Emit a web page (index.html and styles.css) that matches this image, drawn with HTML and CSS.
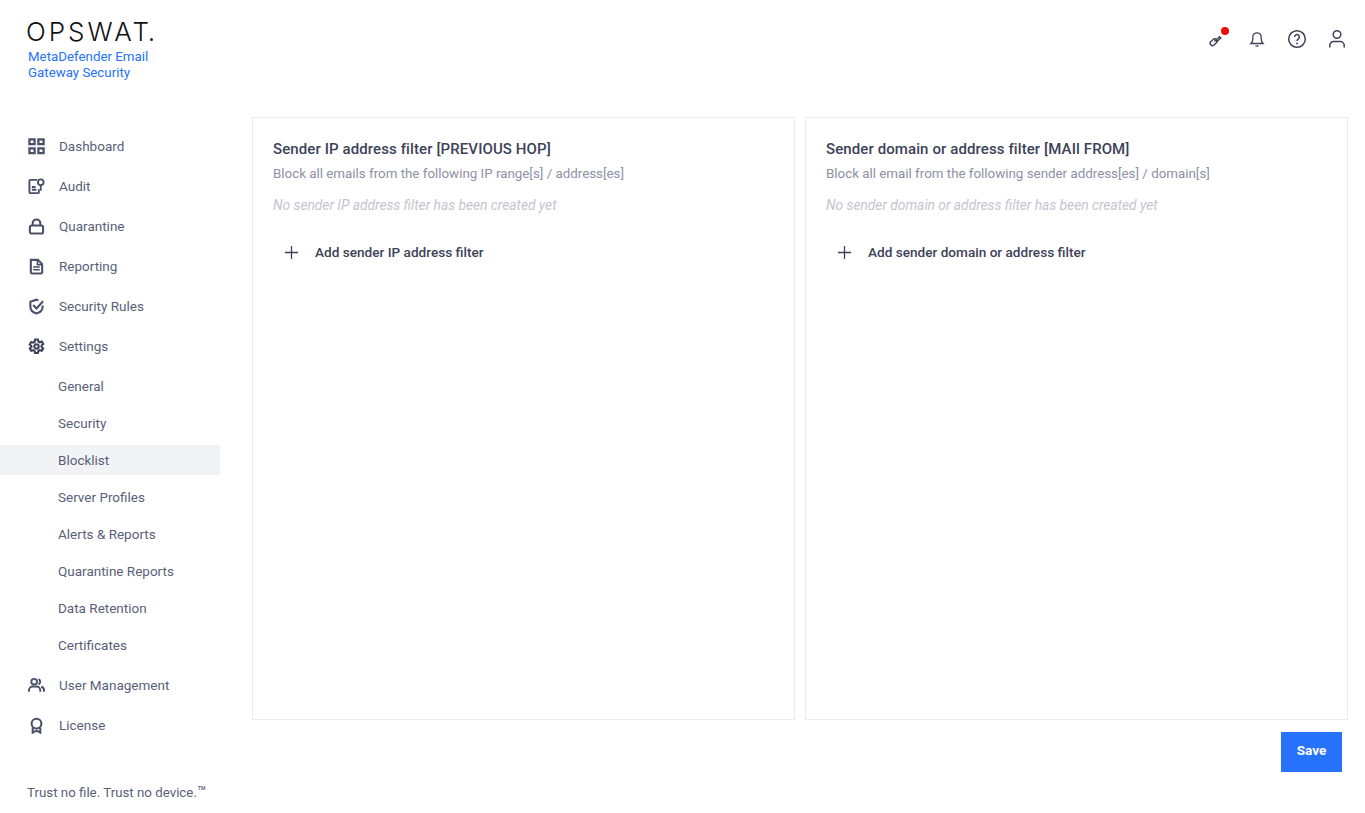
FILE: index.html
```html
<!DOCTYPE html>
<html lang="en">
<head>
<meta charset="utf-8">
<title>Blocklist - MetaDefender Email Gateway Security</title>
<link rel="stylesheet" href="styles.css">
</head>
<body>
<div class="app">
  <aside class="sidebar">
    <div class="brand">
      <div class="logo">OPSWAT<span class="logo-dot"></span></div>
      <div class="product">MetaDefender Email<br>Gateway Security</div>
    </div>
    <nav class="nav">
      <a class="nav-item"><svg class="nav-icon" viewBox="0 0 18 18"><g fill="none" stroke="#4b5069" stroke-width="2.400"><rect x="1.500" y="1.500" width="5.500" height="5"/><rect x="11" y="1.500" width="5.500" height="5"/><rect x="1.500" y="11" width="5.500" height="5"/><rect x="11" y="11" width="5.500" height="5"/></g></svg><span>Dashboard</span></a>
      <a class="nav-item"><svg class="nav-icon" viewBox="0 0 18 18"><g fill="none" stroke="#4b5069" stroke-width="2"><path d="M9.500 2H2.500a1 1 0 0 0-1 1v12a1 1 0 0 0 1 1h8a1 1 0 0 0 1-1v-3"/><circle cx="13.500" cy="4.500" r="3"/><path d="M13.500 7.500v6"/><path d="M4 9.500h4M4 12.500h5"/></g></svg><span>Audit</span></a>
      <a class="nav-item"><svg class="nav-icon" viewBox="0 0 18 18"><g fill="none" stroke="#4b5069" stroke-width="2.200"><rect x="2" y="8" width="14" height="8.500" rx="2"/><path d="M5 8V5.500a4 4 0 0 1 8 0V8"/></g></svg><span>Quarantine</span></a>
      <a class="nav-item"><svg class="nav-icon" viewBox="0 0 18 18"><g fill="none" stroke="#4b5069" stroke-width="2.200"><path d="M3 2h7.500L15 6.500V15a1.500 1.500 0 0 1-1.500 1.500H4.500A1.500 1.500 0 0 1 3 15z"/></g><path d="M10 2v5h5M5.500 9.500h7M5.500 12.500h7" fill="none" stroke="#4b5069" stroke-width="1.700"/></svg><span>Reporting</span></a>
      <a class="nav-item"><svg class="nav-icon" viewBox="0 0 18 18"><g fill="none" stroke="#4b5069" stroke-width="2.200"><path d="M11 2.500 9 1.800 2.500 4v5c0 4 3 6.500 6.500 7.500 3.500-1 6.500-3.500 6.500-7.500V8"/><path d="M5.500 7.500 9 11l7-7.500"/></g></svg><span>Security Rules</span></a>
      <a class="nav-item"><svg class="nav-icon" viewBox="0 0 18 18"><g fill="none" stroke="#3d4258" stroke-width="2.200"><circle cx="9" cy="9" r="2.300"/><path d="M7.500 1.500h3l.5 2.200 1.400.8 2.200-.7 1.500 2.600-1.700 1.500v1.600l1.700 1.500-1.500 2.600-2.200-.7-1.400.8-.5 2.200h-3l-.5-2.200-1.400-.8-2.200.7-1.500-2.600 1.700-1.500V8.400L1.900 6.900l1.500-2.600 2.200.7L7 4.200z"/></g></svg><span>Settings</span></a>
      <a class="nav-sub">General</a>
      <a class="nav-sub">Security</a>
      <a class="nav-sub nav-sub-active">Blocklist</a>
      <a class="nav-sub">Server Profiles</a>
      <a class="nav-sub">Alerts &amp; Reports</a>
      <a class="nav-sub">Quarantine Reports</a>
      <a class="nav-sub">Data Retention</a>
      <a class="nav-sub">Certificates</a>
      <a class="nav-item nav-after"><svg class="nav-icon" viewBox="0 0 18 18"><g fill="none" stroke="#4b5069" stroke-width="2"><circle cx="6.500" cy="5" r="3"/><path d="M1 15.500v-1.500a4 4 0 0 1 4-4h4a4 4 0 0 1 4 4v1.500"/><path d="M11 2.200a3 3 0 0 1 0 5.600M14 10.300a4 4 0 0 1 3 3.700v1.500"/></g></svg><span>User Management</span></a>
      <a class="nav-item"><svg class="nav-icon" viewBox="0 0 18 18"><g fill="none" stroke="#4b5069" stroke-width="2.200"><circle cx="9" cy="7" r="5.200"/><path d="M5 11.500v5L9 14.500l4 2v-5"/></g></svg><span>License</span></a>
    </nav>
    <div class="tagline">Trust no file. Trust no device.<span class="tm">™</span></div>
  </aside>
  <div class="content">
    <header class="topbar">
      <button class="top-btn key-btn" aria-label="License key"><svg width="18" height="18" viewBox="0 0 18 18"><g fill="none" stroke="#3d4258" stroke-width="1.400"><rect x="1.800" y="10" width="7.500" height="4.600" rx="2.300" transform="rotate(-42 5.500 12.300)"/><path d="M6.300 11.500l5.300-4.800 1.200 1.300-4.300 3.900"/></g></svg><span class="badge"></span></button>
      <button class="top-btn" aria-label="Notifications"><svg width="18" height="18" viewBox="0 0 18 18"><g fill="none" stroke="#3d4258" stroke-width="1.300"><path d="M3 13.500c1.300-1.300 1.800-2.500 1.800-4.500V7a4.200 4.200 0 0 1 8.400 0v2c0 2 .5 3.200 1.800 4.500z"/><path d="M7.500 16h3"/></g></svg></button>
      <button class="top-btn" aria-label="Help"><svg width="20" height="20" viewBox="0 0 20 20"><circle cx="10" cy="10" r="8.300" fill="none" stroke="#3d4258" stroke-width="1.500"/><path d="M7.600 8a2.400 2.400 0 1 1 3.600 2.100c-.8.500-1.200 1-1.200 1.900" fill="none" stroke="#3d4258" stroke-width="1.500"/><circle cx="10" cy="14.500" r=".9" fill="#3d4258"/></svg></button>
      <button class="top-btn" aria-label="Account"><svg width="20" height="20" viewBox="0 0 20 20"><g fill="none" stroke="#3d4258" stroke-width="1.500"><circle cx="10" cy="5.500" r="3.800"/><path d="M2.800 18.500v-2a4 4 0 0 1 4-4h6.400a4 4 0 0 1 4 4v2"/></g></svg></button>
    </header>
    <main class="main">
      <div class="cards">
        <section class="card">
          <h2 class="card-title">Sender IP address filter [PREVIOUS HOP]</h2>
          <p class="card-desc">Block all emails from the following IP range[s] / address[es]</p>
          <p class="card-empty">No sender IP address filter has been created yet</p>
          <button class="add-btn"><svg class="plus" viewBox="0 0 16 16"><path d="M8 1v14M1 8h14" stroke="#3d4258" stroke-width="1.400" fill="none"/></svg><span>Add sender IP address filter</span></button>
        </section>
        <section class="card">
          <h2 class="card-title">Sender domain or address filter [MAIl FROM]</h2>
          <p class="card-desc">Block all email from the following sender address[es] / domain[s]</p>
          <p class="card-empty">No sender domain or address filter has been created yet</p>
          <button class="add-btn"><svg class="plus" viewBox="0 0 16 16"><path d="M8 1v14M1 8h14" stroke="#3d4258" stroke-width="1.400" fill="none"/></svg><span>Add sender domain or address filter</span></button>
        </section>
      </div>
      <div class="actions"><button class="save">Save</button></div>
    </main>
  </div>
</div>
</body>
</html>
```
FILE: styles.css
```css
* { box-sizing: border-box; }
html, body { margin: 0; height: 100%; }
body {
  font-family: Roboto, "Liberation Sans", sans-serif;
  font-size: 13.500px;
  color: #3d4258;
  background: #fff;
  overflow: hidden;
}
.app { display: flex; height: 813px; }

.sidebar { width: 220px; flex: none; display: flex; flex-direction: column; }
.brand { padding: 19px 0 0 28px; height: 131px; }
.logo {
  display: flex;
  align-items: flex-end;
  font-family: Inter, sans-serif;
  font-weight: 300;
  font-size: 26px;
  line-height: 26px;
  letter-spacing: 3px;
  color: #111;
  margin-left: -2px;
  white-space: nowrap;
}
.logo-dot {
  width: 3px; height: 3px; border-radius: 50%; background: #222;
  margin: 0 0 4px -2px;
}
.product { color: #2672fb; font-size: 13.300px; line-height: 16px; margin-top: 4px; }

.nav { display: flex; flex-direction: column; }
.nav-item {
  display: flex; align-items: center; gap: 14px;
  height: 30px; margin-bottom: 10px; padding-left: 28px;
  color: #5a5f78;
}
.nav-icon { width: 17px; height: 17px; flex: none; }
.nav-sub {
  display: flex; align-items: center;
  height: 30px; margin-bottom: 7px; padding-left: 58px;
  color: #5a5f78;
}
.nav-sub-active { background: #f2f3f6; }
.nav-after { margin-top: 3px; }
.tagline { margin-top: 34px; padding-left: 27px; color: #5a5f78; line-height: 16px; font-size: 13.300px; }
.tm { font-size: 15px; }

.content { flex: 1; min-width: 0; display: flex; flex-direction: column; }
.topbar {
  display: flex; justify-content: flex-end; align-items: center; gap: 20px;
  height: 117px; padding: 0 18px 39px 0;
  flex: none;
}
.top-btn {
  position: relative;
  width: 20px; height: 20px; padding: 0; border: 0; background: none;
  display: flex; align-items: center; justify-content: center;
}
.badge {
  position: absolute; top: -2px; right: -2px;
  width: 8px; height: 8px; border-radius: 50%; background: #ed0c0c;
}
.main { padding: 0 17px 0 32px; }
.cards { display: flex; gap: 10px; }
.card {
  flex: 1; height: 603px;
  border: 1px solid #ebebee;
  padding: 20px;
}
.card-title { margin: 0; font-size: 15px; font-weight: 500; line-height: 22px; color: #3d4258; letter-spacing: .1px; }
.card-desc { margin: 5px 0 0; font-size: 13.350px; line-height: 18px; color: #8d91a5; }
.card-empty { margin: 13px 0 0; font-size: 13.750px; line-height: 18px; font-style: italic; color: #c3c5cf; }
.add-btn {
  display: flex; align-items: center; gap: 16px;
  margin: 28px 0 0 11px; padding: 0; border: 0; background: none;
  font: 500 13.600px/20px Roboto, "Liberation Sans", sans-serif; color: #3d4258;
}
.plus { width: 15px; height: 15px; }
.actions { display: flex; justify-content: flex-end; padding: 12px 6px 0 0; }
.save {
  width: 61px; height: 40px; border: 0; padding: 0 0 4px; background: #2672fb; color: #fff;
  font: 700 13.500px/20px Roboto, "Liberation Sans", sans-serif;
}
```
